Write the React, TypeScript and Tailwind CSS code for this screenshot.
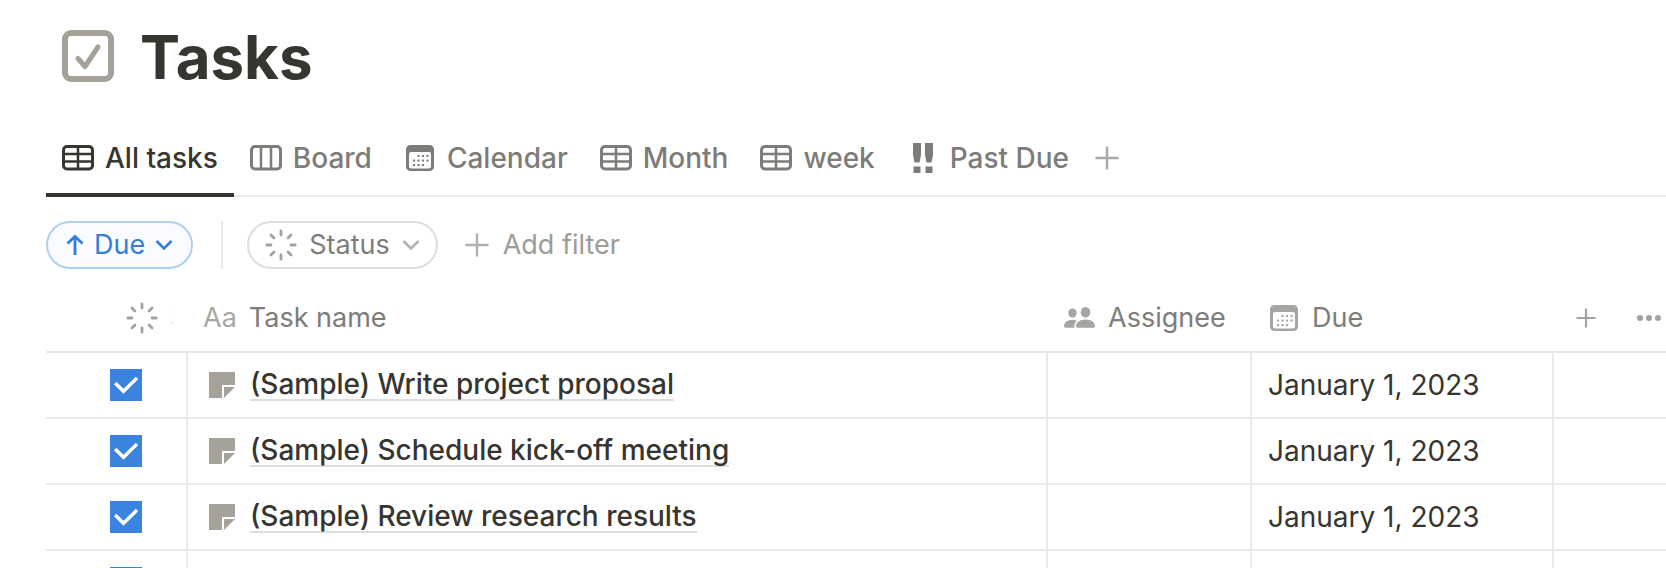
import type { ReactNode } from "react";

type IconProps = { className?: string };

function PageIcon() {
  return (
    <svg width="52" height="52" viewBox="0 0 52 52" fill="none" stroke="#a6a299" aria-hidden="true">
      <rect x="3" y="3" width="46" height="46" rx="6" strokeWidth="6" />
      <path d="M16 28.5 L23 36.5 L36 17" strokeWidth="5" strokeLinecap="round" strokeLinejoin="round" />
    </svg>
  );
}

function TableIcon({ className = "" }: IconProps) {
  return (
    <svg width="32" height="26" viewBox="0 0 32 26" fill="none" stroke="currentColor" className={className} aria-hidden="true">
      <rect x="1.5" y="1.5" width="29" height="22.5" rx="3.5" strokeWidth="3" />
      <path d="M2 9h28M2 16.5h28M16 2v22" strokeWidth="2.5" />
    </svg>
  );
}

function BoardIcon({ className = "" }: IconProps) {
  return (
    <svg width="32" height="26" viewBox="0 0 32 26" fill="none" stroke="currentColor" className={className} aria-hidden="true">
      <rect x="1.5" y="1.5" width="29" height="22.5" rx="3.5" strokeWidth="3" />
      <path d="M11 2v22M21 2v22" strokeWidth="2.5" />
    </svg>
  );
}

const calendarDots = [
  [12.5, 11], [17, 11], [21.5, 11],
  [8, 15.5], [12.5, 15.5], [17, 15.5], [21.5, 15.5],
  [8, 20], [12.5, 20], [17, 20],
];

function CalendarIcon({ className = "" }: IconProps) {
  return (
    <svg width="28" height="26" viewBox="0 0 28 26" fill="none" className={className} aria-hidden="true">
      <path
        fill="currentColor"
        fillRule="evenodd"
        d="M4.5 0h19A4.5 4.5 0 0 1 28 4.5v17a4.5 4.5 0 0 1-4.5 4.5h-19A4.5 4.5 0 0 1 0 21.500v-17A4.5 4.5 0 0 1 4.500 0zM5 7a2 2 0 0 0-2 2v12.500a2 2 0 0 0 2 2h18a2 2 0 0 0 2-2V9a2 2 0 0 0-2-2z"
      />
      {calendarDots.map(([x, y]) => (
        <rect key={`${x}-${y}`} x={x - 1.1} y={y - 1.1} width="2.2" height="2.2" rx="0.6" fill="currentColor" />
      ))}
    </svg>
  );
}

function ExclamationIcon({ className = "" }: IconProps) {
  return (
    <svg width="20" height="30" viewBox="0 0 20 30" fill="currentColor" className={className} aria-hidden="true">
      <path d="M0 0h8v12L6.500 19.500h-5L0 12zM12 0h8v12l-1.500 7.500h-5L12 12zM0.500 23.500h7V30h-7zM12.500 23.500h7V30h-7z" />
    </svg>
  );
}

function PlusIcon({ size, stroke }: { size: number; stroke: number }) {
  return (
    <svg width={size} height={size} viewBox={`0 0 ${size} ${size}`} fill="none" stroke="currentColor" aria-hidden="true">
      <path d={`M${size / 2} 0.500v${size - 1}M0.500 ${size / 2}h${size - 1}`} strokeWidth={stroke} />
    </svg>
  );
}

function StatusIcon() {
  return (
    <svg width="32" height="32" viewBox="-16 -16 32 32" fill="none" stroke="currentColor" strokeWidth="2.8" strokeLinecap="round" aria-hidden="true">
      {[0, 45, 90, 135, 180, 225, 270, 315].map((angle) => (
        <path key={angle} d="M0 -14.200V-10" transform={`rotate(${angle})`} />
      ))}
    </svg>
  );
}

function ArrowUpIcon() {
  return (
    <svg width="18" height="22" viewBox="0 0 18 22" fill="none" stroke="currentColor" strokeWidth="2.8" aria-hidden="true">
      <path d="M9 21V3M1.500 9.500L9 2.500l7.500 7" />
    </svg>
  );
}

function ChevronIcon() {
  return (
    <svg width="18" height="12" viewBox="0 0 18 12" fill="none" stroke="currentColor" strokeWidth="2.6" aria-hidden="true">
      <path d="M1.500 2L9 9.500l7.500-7.500" />
    </svg>
  );
}

function PeopleIcon() {
  return (
    <svg width="32" height="22" viewBox="0 0 32 22" fill="currentColor" aria-hidden="true">
      <ellipse cx="8.500" cy="6" rx="4.200" ry="4.600" />
      <path d="M0 19.300C0 15.600 3.700 12.800 8.500 12.800c1.600 0 3 .3 4.300.9-1.800 1.700-2.800 4-2.400 7H1.600c-1 0-1.600-.5-1.600-1.400z" />
      <ellipse cx="21.500" cy="5.300" rx="4.800" ry="5.200" />
      <path d="M12 19c0-3.600 4-6.500 9.500-6.500S31 15.400 31 19c0 1.100-.6 1.700-1.700 1.700H13.700c-1.100 0-1.700-.6-1.700-1.700z" />
    </svg>
  );
}

function NoteIcon() {
  return (
    <svg width="26" height="26" viewBox="0 0 26 26" fill="#a6a299" className="shrink-0" aria-hidden="true">
      <path d="M0 0h26v13H13v13H0z" />
      <path d="M15 15h11L15 26z" />
    </svg>
  );
}

function DotsIcon() {
  return (
    <svg width="26" height="8" viewBox="0 0 26 8" fill="currentColor" className="shrink-0" aria-hidden="true">
      <circle cx="4" cy="4" r="3" />
      <circle cx="13" cy="4" r="3" />
      <circle cx="22" cy="4" r="3" />
    </svg>
  );
}

const tabs: { label: string; icon: ReactNode }[] = [
  { label: "All tasks", icon: <TableIcon /> },
  { label: "Board", icon: <BoardIcon /> },
  { label: "Calendar", icon: <CalendarIcon /> },
  { label: "Month", icon: <TableIcon /> },
  { label: "week", icon: <TableIcon /> },
  { label: "Past Due", icon: <ExclamationIcon /> },
];

const rows = [
  { name: "(Sample) Write project proposal", due: "January 1, 2023" },
  { name: "(Sample) Schedule kick-off meeting", due: "January 1, 2023" },
  { name: "(Sample) Review research results", due: "January 1, 2023" },
  { name: "", due: "" },
];

function Checkbox({ label }: { label: string }) {
  return (
    <span className="grid size-8">
      <input
        type="checkbox"
        defaultChecked
        aria-label={label}
        className="peer col-start-1 row-start-1 size-8 appearance-none border-2 border-[#a6a299] checked:border-0 checked:bg-[#3a84df]"
      />
      <svg
        width="32"
        height="32"
        viewBox="0 0 32 32"
        fill="none"
        stroke="white"
        strokeWidth="3.4"
        className="pointer-events-none invisible col-start-1 row-start-1 peer-checked:visible"
        aria-hidden="true"
      >
        <path d="M5.200 14l8.300 8.300L27 9" />
      </svg>
    </span>
  );
}

export default function App() {
  return (
    <main className="h-screen overflow-hidden bg-white pl-[46px] font-['Inter',sans-serif] text-[27px] leading-8 text-[#37352f]">
      <header className="flex h-28 items-center gap-[26px] pl-4">
        <PageIcon />
        <h1 className="pt-0.5 text-[60px] leading-[76px] font-bold">Tasks</h1>
      </header>

      <nav className="flex h-[85px] items-stretch border-b-2 border-[#e9e9e7] text-[28px] font-medium text-[#7d7c78]">
        {tabs.map((tab, index) => (
          <button
            key={tab.label}
            type="button"
            className={
              index === 0
                ? "-mb-0.5 flex items-center gap-[11px] border-b-4 border-[#37352f] px-4 pt-[18px] pb-2 text-[#37352f]"
                : "flex items-center gap-[11px] px-4 pt-4 pb-2"
            }
          >
            <span className="flex w-8 justify-center">{tab.icon}</span>
            {tab.label}
          </button>
        ))}
        <button type="button" aria-label="Add view" className="px-2.5 pt-4 pb-2 text-[#a9a8a4]">
          <PlusIcon size={24} stroke={2.4} />
        </button>
      </nav>

      <div className="mt-6 flex h-12 items-center">
        <button type="button" className="flex h-12 items-center gap-2.5 rounded-full border-2 border-[#aecff5] bg-[#fafbff] px-[18px] text-[#337ddd]">
          <ArrowUpIcon />
          Due
          <ChevronIcon />
        </button>
        <div className="mr-6 ml-7 h-12 w-0.5 bg-[#e9e9e7]" />
        <button type="button" className="flex h-12 items-center gap-3 rounded-full border-2 border-[#dededc] px-4 text-[#7d7c78]">
          <span className="text-[#a3a29e]"><StatusIcon /></span>
          Status
          <span className="text-[#b3b2af]"><ChevronIcon /></span>
        </button>
        <button type="button" className="ml-[27px] flex items-center gap-3.5 text-[#9c9b96]">
          <span className="text-[#b0afab]"><PlusIcon size={24} stroke={2.4} /></span>
          Add filter
        </button>
      </div>

      <table className="w-full table-fixed border-separate border-spacing-0 text-left">
        <colgroup>
          <col className="w-[142px]" />
          <col className="w-[860px]" />
          <col className="w-[204px]" />
          <col className="w-[302px]" />
          <col />
        </colgroup>
        <thead>
          <tr className="h-[84px] text-[#7d7c78] [&>th]:border-b-2 [&>th]:border-[#e9e9e7] [&>th]:p-0 [&>th]:pt-4 [&>th]:font-normal">
            <th>
              <div className="ml-20 flex w-[46px] gap-3 overflow-hidden">
                <span className="shrink-0 text-[#a3a29e]"><StatusIcon /></span>
                <span>Status</span>
              </div>
            </th>
            <th>
              <div className="flex items-center gap-3 pl-[15px]">
                <span className="text-[#a9a8a4]">Aa</span>
                Task name
              </div>
            </th>
            <th>
              <div className="flex items-center gap-3 pl-4">
                <span className="text-[#a6a5a1]"><PeopleIcon /></span>
                Assignee
              </div>
            </th>
            <th>
              <div className="flex items-center gap-3.5 pl-[18px]">
                <span className="text-[#a6a5a1]"><CalendarIcon /></span>
                Due
              </div>
            </th>
            <th>
              <div className="flex items-center gap-10 pl-[22px] text-[#a3a29e]">
                <button type="button" aria-label="Add property"><PlusIcon size={20} stroke={2.2} /></button>
                <button type="button" aria-label="More options"><DotsIcon /></button>
              </div>
            </th>
          </tr>
        </thead>
        <tbody className="text-[28px]">
          {rows.map((row, index) => (
            <tr key={index} className="h-[66px] [&>td]:border-b-2 [&>td]:border-[#e9e9e7] [&>td]:p-0 [&>td:not(:last-child)]:border-r-2">
              <td>
                <div className="pl-16">
                  <Checkbox label={row.name ? `${row.name} done` : "Done"} />
                </div>
              </td>
              <td>
                {row.name && (
                  <div className="flex items-center gap-[15px] pl-[21px]">
                    <NoteIcon />
                    <a href="#" className="border-b-2 border-[#dededc] leading-[30px] font-medium">
                      {row.name}
                    </a>
                  </div>
                )}
              </td>
              <td />
              <td>
                <div className="pl-4">{row.due}</div>
              </td>
              <td />
            </tr>
          ))}
        </tbody>
      </table>
    </main>
  );
}
